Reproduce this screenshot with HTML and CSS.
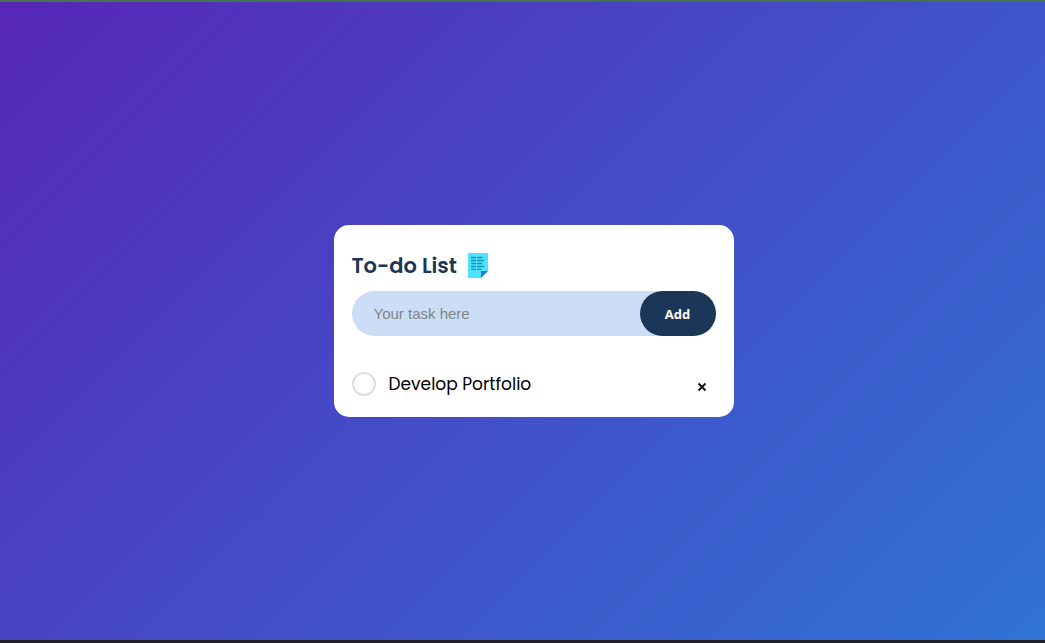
FILE: index.html
```html
<!DOCTYPE html>
<html lang="en">
<head>
<meta charset="utf-8">
<title>To-do List</title>
<link rel="stylesheet" href="styles.css">
</head>
<body class="page">
<main class="card">
  <h1 class="title">To-do List
    <svg class="note" viewBox="0 0 20 26" aria-hidden="true">
      <path fill="#4de3ff" d="M1 0h18a1 1 0 0 1 1 1v17l-7 7H1a1 1 0 0 1-1-1V1a1 1 0 0 1 1-1z"/>
      <path fill="#2f78da" d="M13 18h7l-7 7z"/>
      <path stroke="#1792b5" stroke-width="1.3" d="M3 4.5h5M3 7.5h5M3 10.5h5M3 13.5h5M3 16.3h5M9 4.5h5.500M9 7.500h7M9 10.500h5M9 13.500h7M9 16.300h4.500"/>
    </svg>
  </h1>
  <form class="entry">
    <input class="entry-text" type="text" placeholder="Your task here" aria-label="Your task here">
    <button class="entry-add" type="button">Add</button>
  </form>
  <ul class="tasks">
    <li class="task">
      <label class="task-label"><input class="task-check" type="checkbox">Develop Portfolio</label>
      <button class="task-remove" type="button" aria-label="Remove">
        <svg class="cross" viewBox="0 0 10 10" aria-hidden="true"><path d="M1.500 1.500l7 7M8.500 1.500l-7 7"/></svg>
      </button>
    </li>
  </ul>
</main>
</body>
</html>
```
FILE: styles.css
```css
* { box-sizing: border-box; margin: 0; padding: 0; }
.page {
  min-height: 100vh;
  display: flex;
  align-items: center;
  justify-content: center;
  padding: 0 0 0 22px;
  border-top: 2px solid #45734a;
  border-bottom: 3px solid #222226;
  background: linear-gradient(135deg, #5726b7, #3073d5) padding-box;
  font-family: Poppins, Inter, sans-serif;
}
.card {
  width: 100%;
  max-width: 400px;
  padding: 27px 18px 20px;
  border-radius: 15px;
  background: #fff;
}
.title {
  display: flex;
  align-items: center;
  gap: 11px;
  height: 28px;
  margin-bottom: 11px;
  color: #1b3656;
  font-size: 21px;
  line-height: 30px;
  font-weight: 600;
}
.note { width: 20px; height: 26px; }
.entry {
  display: flex;
  height: 45px;
  border-radius: 23px;
  background: #ccdef6;
}
.entry-text {
  flex: 1;
  min-width: 0;
  padding: 0 22px;
  border: 0;
  outline: 0;
  background: none;
  font: 15px "Liberation Sans", Arial, sans-serif;
}
.entry-text::placeholder { color: #7f8487; }
.entry-add {
  width: 76px;
  border: 0;
  border-radius: 23px;
  background: #1b3656;
  color: #fff;
  font: 700 13px "Open Sans", sans-serif;
}
.tasks { margin-top: 35px; list-style: none; }
.task {
  display: flex;
  align-items: center;
  justify-content: space-between;
  padding-right: 9px;
  color: #000;
}
.task-label {
  display: flex;
  align-items: center;
  gap: 13px;
  font-size: 17px;
  line-height: 26px;
}
.task-check {
  appearance: none;
  width: 24px;
  height: 24px;
  border: 2px solid #dedede;
  border-radius: 50%;
}
.task-remove {
  display: flex;
  padding-top: 6px;
  border: 0;
  background: none;
}
.cross { width: 10px; height: 10px; stroke: #111; stroke-width: 2; }
```
